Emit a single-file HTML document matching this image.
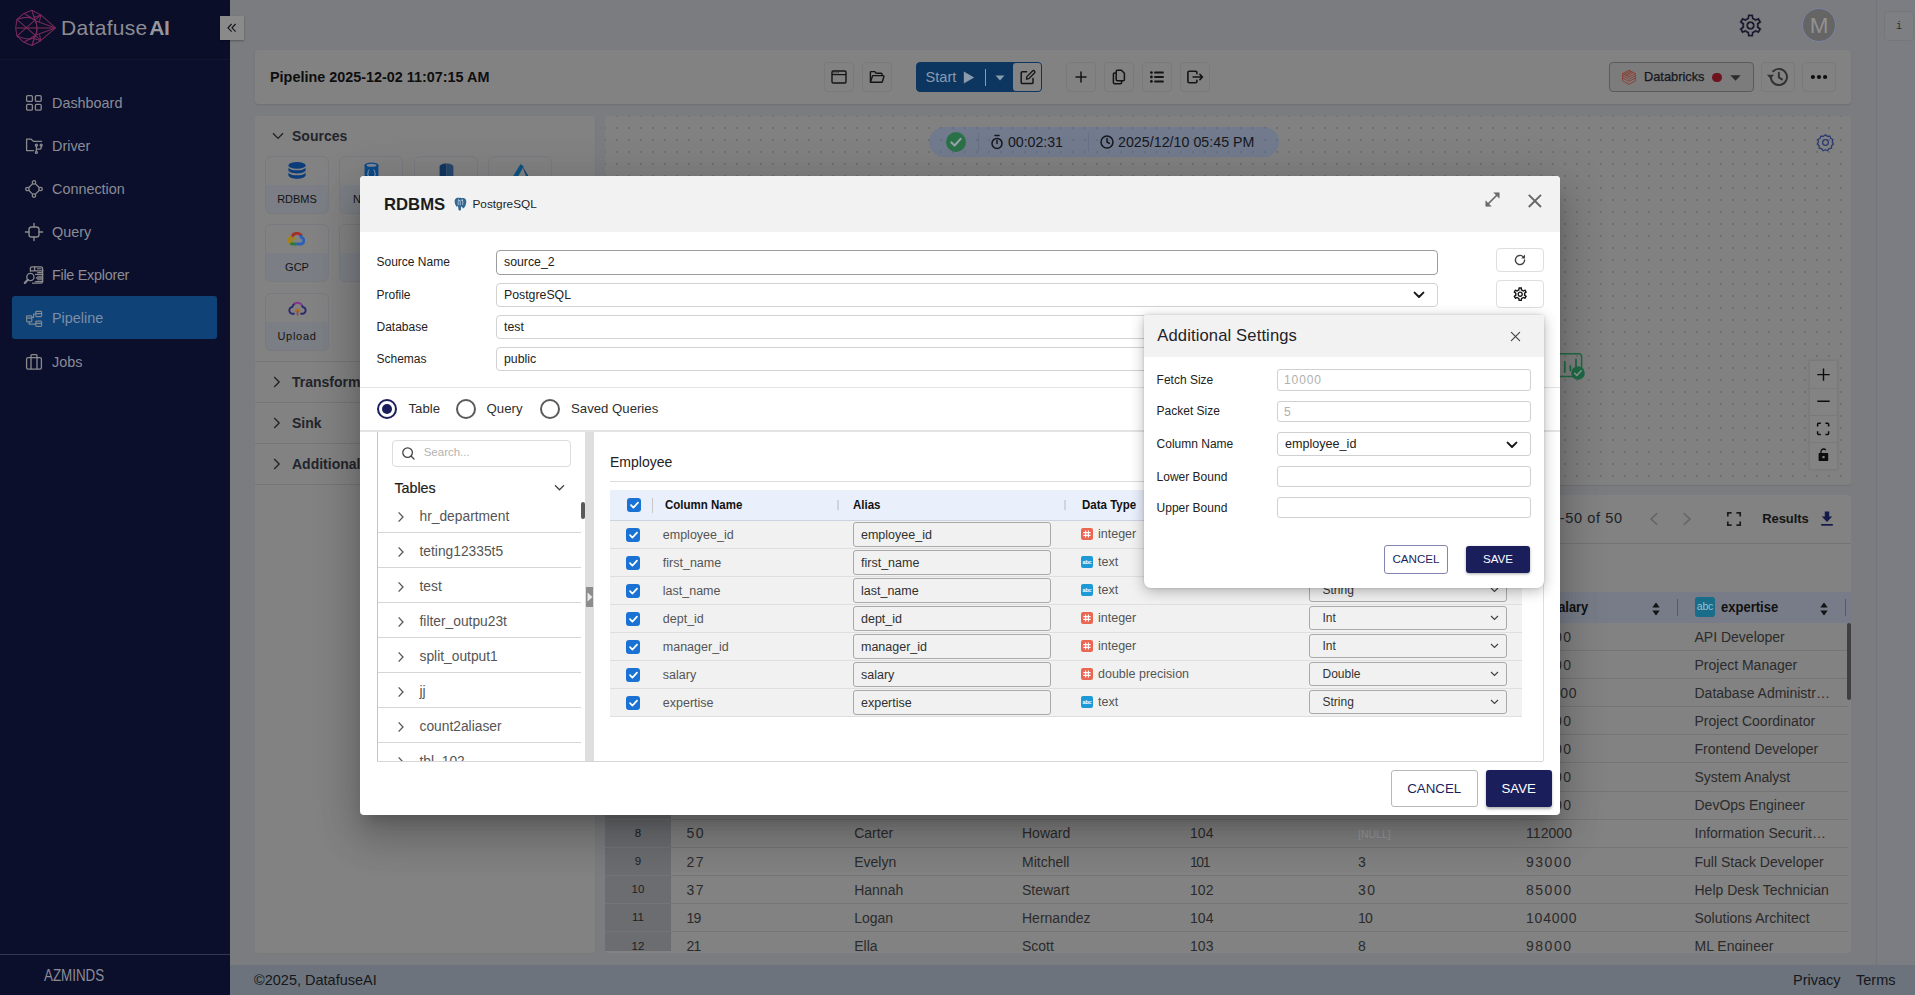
<!DOCTYPE html>
<html>
<head>
<meta charset="utf-8">
<title>DatafuseAI Pipeline</title>
<style>
*{box-sizing:border-box;margin:0;padding:0}
html,body{width:1915px;height:995px;overflow:hidden}
body{font-family:"Liberation Sans",sans-serif;background:#7b7c7f;position:relative;color:#1a1a1a}
.abs{position:absolute}
svg{display:block}
/* ---------- sidebar ---------- */
#sidebar{position:absolute;left:0;top:0;width:230px;height:995px;background:#0c0f2b}
#sidebar .hd{position:absolute;left:0;top:0;width:230px;height:60px;border-bottom:1px solid #10142f;background:#0b0e28}
#brand{position:absolute;left:61px;top:14px;font-size:21px;letter-spacing:.32px;color:#8b8c92;line-height:28px;white-space:nowrap}
#brand b{color:#96979d;letter-spacing:-.4px;margin-left:1.5px}
.nav{position:absolute;left:12px;width:205px;height:43px;border-radius:3px;color:#8a8c97;font-size:14.4px;line-height:42px;padding-left:40px;white-space:nowrap}
.nav svg{position:absolute;left:12px;top:11px}
.nav.act{background:#0f4277;color:#7d8ea6;line-height:45px}.nav.act svg{top:12.6px}
#sfoot{position:absolute;left:0;top:954px;width:230px;height:41px;border-top:1px solid #34374f;color:#8a8c97;font-size:16px;line-height:41px;padding-left:0}
/* ---------- main ---------- */
#collapse{position:absolute;left:220px;top:16px;width:24px;height:24px;background:#8a8a8a;box-shadow:0 1px 2px rgba(0,0,0,.3)}
.card{position:absolute;background:#828282;border:1px solid #828282;border-radius:3px}
.tbtn{position:absolute;width:30px;height:30px;top:62px;border:1px solid #797a7c;border-radius:4px;background:#828282}
.tbtn svg{position:absolute;left:50%;top:50%;transform:translate(-50%,-50%)}
#footer{position:absolute;left:230px;top:965px;width:1685px;height:30px;background:#6c737c;color:#15171b;font-size:14.5px;line-height:30px}
#rail{position:absolute;left:1876px;top:0;width:38px;height:965px;background:#7b7d82;border-left:1px solid #737579}
/* ---------- modal ---------- */
#modal{position:absolute;left:360px;top:176px;width:1200px;height:639px;background:#fff;border-radius:4px;box-shadow:0 11px 15px -7px rgba(0,0,0,.2),0 24px 38px 3px rgba(0,0,0,.14),0 9px 46px 8px rgba(0,0,0,.12)}
#mhead{position:absolute;left:0;top:0;width:1200px;height:56px;background:#f2f2f2;border-radius:4px 4px 0 0}
.lbl{position:absolute;font-size:12.5px;color:#222;white-space:nowrap}
.inp{position:absolute;border:1px solid #c9c9c9;border-radius:3px;background:#fff;font-size:12.5px;color:#222;padding-left:7px;white-space:nowrap}
/* ---------- popup ---------- */
#pop{position:absolute;left:1144px;top:315px;width:400px;height:273px;background:#fff;border-radius:2px 2px 7px 7px;box-shadow:0 3px 14px rgba(0,0,0,.28),0 0 3px rgba(0,0,0,.15)}
#phead{position:absolute;left:0;top:0;width:400px;height:41.5px;background:#f2f2f2;border-radius:2px 2px 0 0}
</style>
</head>
<body>
<!--SIDEBAR-->
<div id="sidebar">
  <div class="hd"></div>
  <svg class="abs" style="left:8px;top:4px" width="60" height="48" viewBox="8 4 60 48" fill="none" stroke="#76295a" stroke-width="1.05" stroke-linejoin="round">
<path d="M31.9 10.3L23.9 13.4L16.9 19.4L15.7 27.9L16.9 36.1L23.9 42.3L31.9 45.5L40.8 40.7L55.5 27.9L40.8 14.9Z"/>
<path d="M15.7 27.9H55" stroke-width="1.5" stroke="#5e234b"/>
<path d="M16.9 19.4L37 36.8L40.8 40.7M16.9 36.1L40.8 14.9M16.9 19.4C24 17 31 17 34 19.5C38 24 38 32 34 37.5C31 40 24 39 16.9 36.100000000000001"/>
<path d="M23.9 13.4L36 21L55.5 27.9M23.9 42.3L36 35L55.5 27.9M31.9 10.3L36.5 24L37 32L31.9 45.5M31.9 10.3L34 17.5L40.8 14.9M31.9 45.5L34 38.5L40.8 40.7M40.8 14.9L39.5 21.5M40.8 40.7L39.5 34.5M23.9 13.4L31 17.5M23.9 42.3L31 38.5"/>
</svg>
  <div id="brand">Datafuse<b>AI</b></div>
  <div class="nav" style="top:82px"><svg width="20" height="20" viewBox="0 0 20 20" fill="none" stroke="#8a8a8d" stroke-width="1.3"><rect x="2.6" y="2.6" width="5.8" height="5.8" rx="1.2"/><rect x="11.4" y="2.6" width="5.8" height="5.8" rx="1.2"/><rect x="2.6" y="11.4" width="5.8" height="5.8" rx="1.2"/><rect x="11.4" y="11.4" width="5.8" height="5.8" rx="1.2"/></svg>Dashboard</div>
  <div class="nav" style="top:125.2px"><svg width="20" height="20" viewBox="0 0 20 20" fill="none" stroke="#8a8a8d" stroke-width="1.3" stroke-linecap="round" stroke-linejoin="round"><path d="M9.6 14.6H2.6V3.2h4.6l2.2 2.2h8.2"/><circle cx="12.4" cy="9.2" r="1" /><circle cx="17.2" cy="9.2" r="1"/><circle cx="12.4" cy="16.4" r="1"/><path d="M12.4 10.2v5.2M17.2 10.2v1.2c0 1.2-.8 1.8-2 1.8h-2.8"/></svg>Driver</div>
  <div class="nav" style="top:168.3px"><svg width="20" height="20" viewBox="0 0 20 20" fill="none" stroke="#8a8a8d" stroke-width="1.3"><circle cx="10" cy="3.4" r="1.7"/><circle cx="10" cy="16.6" r="1.7"/><circle cx="3.4" cy="10" r="1.7"/><circle cx="16.6" cy="10" r="1.7"/><path d="M8.8 4.6L4.6 8.8M11.2 4.6l4.2 4.2M4.6 11.2l4.2 4.2M15.4 11.2l-4.2 4.2"/></svg>Connection</div>
  <div class="nav" style="top:211.2px"><svg width="20" height="20" viewBox="0 0 20 20" fill="none" stroke="#8a8a8d" stroke-width="1.4" stroke-linecap="round"><rect x="5" y="5" width="10" height="10" rx="2.6"/><path d="M10 1.4V5M10 15v3.6M1.4 10H5M15 10h3.6"/></svg>Query</div>
  <div class="nav" style="top:254.3px;letter-spacing:-0.28px"><svg width="22" height="22" viewBox="0 0 22 22" fill="none" stroke="#8a8a8d" stroke-width="1.3" stroke-linecap="round" style="left:11px;top:10px"><path d="M7.4 7.2V4.4c0-1 .7-1.6 1.6-1.6h9c1 0 1.6.7 1.6 1.6v13.200000000000001c0 1-.7 1.6-1.6 1.6H9.6"/><path d="M7.6 6.800000000000001H20M12.6 10.4h7.2M13.4 14h6.4M12.6 17.6h7.2M11.6 2.8v4"/><path d="M14.4 4.8h3.6M14.6 8.6h4M14.6 12.2h4M14.6 15.8h4" stroke-width="1.1"/><circle cx="7.4" cy="13" r="3.6"/><path d="M4.8 15.8L1.8 19" stroke-width="2.2"/></svg>File Explorer</div>
  <div class="nav act" style="top:296px"><svg width="20" height="20" viewBox="0 0 20 20" fill="none" stroke="#7f8791" stroke-width="1.2" stroke-linejoin="round"><rect x="2.6" y="6.8" width="5.2" height="6" rx=".8"/><rect x="11.8" y="2.4" width="5.8" height="5.2" rx=".8"/><rect x="11.8" y="12.2" width="5.8" height="5.2" rx=".8"/><path d="M2.6 9.2h5.2M11.8 4.6h5.800000000000001M11.8 14.4h5.800000000000001M7.8 8.4h1.8V5h2.2M5.2 12.8v2.4h6.6"/></svg>Pipeline</div>
  <div class="nav" style="top:340.5px"><svg width="20" height="20" viewBox="0 0 20 20" fill="none" stroke="#8a8a8d" stroke-width="1.3" stroke-linejoin="round"><rect x="2.6" y="5.6" width="14.8" height="11.6" rx="1.4"/><path d="M7 5.4V3.6c0-.6.4-1 1-1h4c.6 0 1 .4 1 1v1.8M7 5.6v11.6M13 5.6v11.6"/></svg>Jobs</div>
  <div id="sfoot"><span style="position:absolute;left:43.5px;top:0;transform:scaleX(.835);transform-origin:0 0">AZMINDS</span></div>
</div>
<!--MAIN-->
<div id="collapse"><svg width="24" height="24" viewBox="0 0 24 24" fill="none" stroke="#111318" stroke-width="1.1"><path d="M11.600000000000001 8L8 11.8l3.6 3.8M15.600000000000001 8L12 11.8l3.6 3.8"/></svg></div>
<div class="card" id="topcard" style="left:255px;top:50px;width:1596px;height:54px;box-shadow:0 1px 2px rgba(0,0,0,.1)"></div>
<div class="card" id="leftcard" style="left:255px;top:116px;width:341px;height:838px;border-color:#828282 #7a7a7b #7a7a7b #828282">
<style>
.tile{position:absolute;width:64px;height:58px;border:1px solid #787a7f;border-radius:6px;background:linear-gradient(#828282 0,#828282 28px,#7b7e84 28px);overflow:hidden}
.tile span{position:absolute;left:0;width:62px;top:34px;text-align:center;font-size:11px;line-height:16px;color:#141414}
.tile svg{position:absolute}
.acc{position:absolute;left:-1px;width:341px;height:41px;border-top:1px solid #757678;font-size:14px;font-weight:700;color:#23252b;line-height:40px;padding-left:37px;white-space:nowrap}
.acc svg{position:absolute;left:18px;top:14px}
</style>
<svg class="abs" style="left:16px;top:15px" width="12" height="8" viewBox="0 0 12 8" fill="none" stroke="#222" stroke-width="1.3"><path d="M1 1.2l5 5.2 5-5.2"/></svg>
<div class="abs" style="left:36px;top:10px;font-size:14px;font-weight:700;color:#23252b;line-height:18px">Sources</div>
<div class="tile" style="left:9px;top:39px"><svg style="left:21px;top:4px" width="20" height="20" viewBox="0 0 20 20" fill="#0c3d7a"><ellipse cx="10" cy="4.4" rx="8.6" ry="3.4"/><path d="M1.4 6.4c1 2 4.6 2.800000000000001 8.6 2.800000000000001s7.6-.8 8.6-2.800000000000001v3.2c-1 2-4.6 2.800000000000001-8.6 2.800000000000001S2.4 11.600000000000001 1.4 9.6zM1.4 11.4c1 2 4.6 2.800000000000001 8.6 2.800000000000001s7.6-.8 8.6-2.800000000000001v3.2c-1 2.2-4.6 3.2-8.6 3.2s-7.6-1-8.6-3.2z"/></svg><span>RDBMS</span></div>
<div class="tile" style="left:83px;top:39px"><svg style="left:24px;top:5px" width="15" height="22" viewBox="0 0 15 22"><path d="M.6 3.2v15.4c0 1.400000000000001 3 2.400000000000001 6.9 2.400000000000001s6.9-1 6.9-2.400000000000001V3.2z" fill="#0c4a88"/><ellipse cx="7.5" cy="3.2" rx="6.9" ry="2.6" fill="#0c4a88"/><ellipse cx="7.5" cy="3.3" rx="5" ry="1.5" fill="#7d8895"/><path d="M5.6 8c-1.2 0-1.400000000000001.6-1.400000000000001 1.6v1.4c0 .6-.4 1-.8 1 .4 0 .8.4.8 1v1.400000000000001c0 1 .2 1.600000000000001 1.400000000000001 1.600000000000001M9.4 8c1.2 0 1.400000000000001.6 1.400000000000001 1.6v1.4c0 .6.4 1 .8 1-.4 0-.8.4-.8 1v1.400000000000001c0 1-.2 1.600000000000001-1.400000000000001 1.600000000000001" stroke="#8b9cb0" stroke-width="1" fill="none"/></svg><span>NoSQL</span></div>
<div class="tile" style="left:158px;top:39px"><svg style="left:24px;top:5.5px" width="15" height="22" viewBox="0 0 15 22"><path d="M.6 4c0-2 3-3.4 6.9-3.4V21.2c-3.9 0-6.9-1-6.9-2.200000000000001z" fill="#113761"/><path d="M14.4 4c0-2-3-3.4-6.9-3.4V21.2c3.9 0 6.9-1 6.9-2.200000000000001z" fill="#27476c"/></svg><span>S3</span></div>
<div class="tile" style="left:232px;top:39px"><svg style="left:19px;top:6px" width="27" height="22" viewBox="0 0 27 22"><path d="M12.6 1L2.4 17.6l5.6-.4L15.6 3.6z" fill="#0c5384"/><path d="M14.2 2.8l4.4 12.2-8.6 6.4 15.6.2z" fill="#0a4775"/></svg><span>Azure</span></div>
<div class="tile" style="left:9px;top:107px"><svg style="left:22px;top:6.5px" width="17" height="14.2" viewBox="0 0 18 15" fill="none" stroke-width="3.1" stroke-linecap="butt"><path d="M12.2 4.6l1.5-1.5A6 6 0 0 0 3.9 5.4" stroke="#a3332a"/><path d="M4.1 5a4 4 0 0 0-1.1 7.1" stroke="#a58212"/><path d="M6.2 9.6c-.9-.5-1.100000000000001-1.600000000000001-.5-2.400000000000001.6-.8 1.700000000000001-.9 2.400000000000001-.3" stroke="#a58212" stroke-width="2.2"/><path d="M2.8 11.700000000000001c.8.7 1.700000000000001 1 2.700000000000001 1h3.6" stroke="#2a7a3e"/><path d="M8.9 12.700000000000001h4.3a3.500000000000001 3.500000000000001 0 0 0 1.2-6.800000000000001c-.2-1-.7-1.900000000000001-1.400000000000001-2.600000000000001" stroke="#2c5fb5"/></svg><span>GCP</span></div>
<div class="tile" style="left:83px;top:107px"></div>
<div class="tile" style="left:9px;top:176px"><svg style="left:22px;top:5.5px" width="19" height="16.2" viewBox="0 0 20 17" fill="none" stroke-width="2" stroke-linecap="round" stroke-linejoin="round"><path d="M6.2 14.4H5.2A3.5 3.5 0 0 1 4.6 7.4 5.4 5.4 0 0 1 7 3.800000000000001" stroke="#2b2a6b"/><path d="M7 3.800000000000001A5.4 5.4 0 0 1 15.2 6.6" stroke="#86358a"/><path d="M15.2 6.6l.2.800000000000001a3.500000000000001 3.500000000000001 0 0 1-.6 7h-1" stroke="#2b2a6b"/><path d="M10 15.6V10.4" stroke="#a83a3a" stroke-width="1.7"/><path d="M7.800000000000001 11.8L10 9.600000000000001l2.200000000000001 2.200000000000001" stroke="#b06a1c" stroke-width="1.7"/></svg><span style="letter-spacing:.7px">Upload</span></div>
<div class="acc" style="top:244px"><svg width="8" height="12" viewBox="0 0 8 12" fill="none" stroke="#222" stroke-width="1.3"><path d="M1.200000000000001 1l5 5-5 5"/></svg>Transformations</div>
<div class="acc" style="top:285px"><svg width="8" height="12" viewBox="0 0 8 12" fill="none" stroke="#222" stroke-width="1.3"><path d="M1.200000000000001 1l5 5-5 5"/></svg>Sink</div>
<div class="acc" style="top:326px"><svg width="8" height="12" viewBox="0 0 8 12" fill="none" stroke="#222" stroke-width="1.3"><path d="M1.200000000000001 1l5 5-5 5"/></svg>Additional Settings</div>
<div class="abs" style="left:-1px;top:367px;width:341px;height:1px;background:#757678"></div>
</div>
<div class="card" id="canvas" style="left:605px;top:116px;width:1246px;height:369px;border-color:transparent;box-shadow:0 1px 1px rgba(0,0,0,.08);background-color:#818181;background-image:radial-gradient(circle,#6f7073 0.9px,rgba(111,112,115,0) 1.5px);background-size:12px 12px;background-position:5px 5px">
  <!-- status pill -->
  <div class="abs" style="left:323px;top:10px;width:350px;height:30px;border-radius:15px;background:rgba(92,114,162,.4)">
    <div class="abs" style="left:17px;top:5px;width:20px;height:20px;border-radius:50%;background:#2a7148"></div>
    <svg class="abs" style="left:17px;top:5px" width="20" height="20" viewBox="0 0 20 20" fill="none" stroke="#9aa2ad" stroke-width="2.1" stroke-linecap="round" stroke-linejoin="round"><path d="M5.4 10.4l3.2 3.1 6-6.6"/></svg>
    <div class="abs" style="left:49px;top:6px;width:1px;height:18px;background:#687085"></div>
    <svg class="abs" style="left:61px;top:6.5px" width="14" height="16" viewBox="0 0 14 16" fill="none" stroke="#15171c" stroke-width="1.5" stroke-linecap="round"><circle cx="7" cy="9.4" r="5"/><path d="M5 1.6h4M7 6.6v3"/></svg>
    <span class="abs" style="left:79px;top:5.5px;font-size:14.2px;line-height:18px;color:#15171c;letter-spacing:-.04px">00:02:31</span>
    <div class="abs" style="left:159px;top:6px;width:1px;height:18px;background:#687085"></div>
    <svg class="abs" style="left:170px;top:6.5px" width="16" height="16" viewBox="0 0 16 16" fill="none" stroke="#15171c" stroke-width="1.5" stroke-linecap="round" stroke-linejoin="round"><circle cx="8" cy="8" r="6"/><path d="M8 4.4V8l2.4 1.4"/></svg>
    <span class="abs" style="left:189px;top:5.5px;font-size:14.2px;line-height:18px;color:#15171c;letter-spacing:.04px;white-space:nowrap">2025/12/10 05:45 PM</span>
  </div>
  <!-- canvas gear -->
  <svg class="abs" style="left:1209.5px;top:15.5px" width="19" height="19" viewBox="0 0 24 24" fill="none" stroke="#2a3870" stroke-width="1.6" stroke-linejoin="round"><circle cx="12" cy="12" r="3.6"/><path d="M12 2.2l2.400000000000001 2 3.1-.4 1 3 2.800000000000001 1.4-.8 3 1.500000000000001 2.800000000000001-2.3 2.100000000000001-.1 3.1-3.1.6-1.8 2.6-2.900000000000001-1.2-2.900000000000001 1.2-1.8-2.6-3.1-.6-.1-3.1-2.300000000000001-2.100000000000001 1.500000000000001-2.800000000000001-.8-3 2.800000000000001-1.400000000000001 1-3 3.1.4z"/></svg>
  <!-- node icon -->
  <svg class="abs" style="left:948px;top:233px" width="36" height="32" viewBox="1554 350 36 32" fill="none" stroke="#1f6b45" stroke-width="1.5" stroke-linecap="round"><rect x="1556" y="353.8" width="25.6" height="22.6" rx="3"/><path d="M1564.8 362v10M1570.4 366v4.5M1576 359.5v7" stroke-width="1.8"/><circle cx="1578" cy="373" r="6.8" fill="#1f6b45" stroke="none"/><path d="M1574.6 373.2l2.3 2.200000000000001 4.2-4.600000000000001" stroke="#8f9b95" stroke-width="1.5"/></svg>
  <!-- zoom controls -->
  <div class="abs" style="left:1204px;top:244px;width:26.5px;height:108px;background:#838383;box-shadow:0 0 2px 1px rgba(0,0,0,.08)">
    <div class="abs" style="left:0;top:27px;width:27px;height:1px;background:#7a7a7a"></div>
    <div class="abs" style="left:0;top:54px;width:27px;height:1px;background:#7a7a7a"></div>
    <div class="abs" style="left:0;top:81px;width:27px;height:1px;background:#7a7a7a"></div>
    <svg class="abs" style="left:0;top:0" width="27" height="108" viewBox="0 0 27 108" fill="none" stroke="#0c0c0c" stroke-width="1.4"><path d="M13.5 7.4v12.4M7.3 13.6h12.4M7.3 40.2h12.4"/><path d="M7.6 65.6v-2.4c0-.6.4-1 1-1h2.2M15.4 62.2h2.2c.6 0 1 .4 1 1v2.4M18.6 70.2v2.4c0 .6-.4 1-1 1h-2.2M10.8 73.6H8.6c-.6 0-1-.4-1-1v-2.4" stroke-width="1.5"/><path d="M8.6 93c0-.6.4-1 1-1h7.6c.6 0 1 .4 1 1v6c0 .6-.4 1-1 1H9.6c-.6 0-1-.4-1-1z" fill="#0c0c0c" stroke="none"/><path d="M11 92c-.4-2.800000000000001 1.2-4 2.600000000000001-4 .9 0 1.600000000000001.3 2.200000000000001 1" stroke-width="1.3"/><rect x="12.4" y="95" width="2.2" height="2.2" fill="#838383" stroke="none"/></svg>
  </div>
</div>
<!--B:res-->
<div class="card" id="results" style="left:605px;top:495px;width:1246px;height:458px;overflow:hidden;border:0">
<div class="abs" style="left:917px;width:100.6px;text-align:right;top:14px;font-size:14.5px;line-height:19px;color:#202227;white-space:nowrap;letter-spacing:.62px">1-50 of 50</div>
<svg class="abs" style="left:1044px;top:16.5px" width="10" height="14" viewBox="0 0 10 14" fill="none" stroke="#636363" stroke-width="1.5"><path d="M8.2 1.2L2 7l6.2 5.800000000000001"/></svg>
<svg class="abs" style="left:1076.5px;top:16.5px" width="10" height="14" viewBox="0 0 10 14" fill="none" stroke="#636363" stroke-width="1.5"><path d="M1.8 1.2L8 7l-6.2 5.800000000000001"/></svg>
<svg class="abs" style="left:1121px;top:16px" width="16" height="16" viewBox="0 0 16 16" fill="none" stroke="#1c1c1c" stroke-width="1.7"><path d="M1.8 5.6V1.8h3.8M10.4 1.8h3.800000000000001v3.8M14.2 10.4v3.800000000000001h-3.800000000000001M5.6 14.2H1.8v-3.800000000000001"/></svg>
<div class="abs" style="left:1157.3px;top:15px;font-size:13px;font-weight:700;line-height:17px;color:#141414;letter-spacing:-.1px">Results</div>
<svg class="abs" style="left:1216px;top:16px" width="12" height="15" viewBox="0 0 12 15" fill="#141a4a"><path d="M3.8 0.4h4.4v5.2h3L6 11 .8 5.6h3z"/><rect x=".2" y="13" width="11.6" height="1.7"/></svg>
<div class="abs" style="left:0;top:48px;width:1246px;height:1px;background:#747474"></div>
<div class="abs" style="left:0;top:97px;width:1246px;height:30.5px;background:#777c88"></div>
<div class="abs" style="left:946px;top:103px;font-size:14px;font-weight:700;line-height:19px;color:#101010;transform:scaleX(.92);transform-origin:0 0">salary</div>
<svg class="abs" style="left:1046.5px;top:107px" width="8" height="14" viewBox="0 0 8 14" fill="#131313"><path d="M.3 5.6L4 .6l3.7 5zM.3 8.4L4 13.4l3.7-5z"/></svg>
<div class="abs" style="left:1072px;top:104px;width:1px;height:17px;background:#585b64"></div>
<div class="abs" style="left:1090px;top:102px;width:20px;height:20px;border-radius:3px;background:#176d8a;color:#9dbfcc;font-size:10.5px;line-height:19px;text-align:center;letter-spacing:-.2px">abc</div>
<div class="abs" style="left:1115.5px;top:103px;font-size:14px;font-weight:700;line-height:19px;color:#101010;transform:scaleX(.93);transform-origin:0 0">expertise</div>
<svg class="abs" style="left:1214.5px;top:107px" width="8" height="14" viewBox="0 0 8 14" fill="#131313"><path d="M.3 5.6L4 .6l3.7 5zM.3 8.4L4 13.4l3.7-5z"/></svg>
<div class="abs" style="left:1240px;top:104px;width:1px;height:17px;background:#585b64"></div>
<div class="abs" style="left:0;top:127.5px;width:66px;height:328.5px;background:#6c6d70"></div>
<div class="abs" style="left:0;top:155.0px;width:1243px;height:1px;background:#757575"></div>
<div class="abs" style="left:0;top:133.4px;width:66px;text-align:center;font-size:11.5px;line-height:16px;color:#1e1e1e">1</div>
<div class="abs" style="left:81.4px;top:132.7px;font-size:14px;line-height:19px;color:#2b2b2b;white-space:nowrap;letter-spacing:-0.69px">12</div>
<div class="abs" style="left:249.2px;top:132.7px;font-size:14px;line-height:19px;color:#2b2b2b;white-space:nowrap">Liam</div>
<div class="abs" style="left:417px;top:132.7px;font-size:14px;line-height:19px;color:#2b2b2b;white-space:nowrap">Johnson</div>
<div class="abs" style="left:585px;top:132.7px;font-size:14px;line-height:19px;color:#2b2b2b;white-space:nowrap;letter-spacing:-1.42px">101</div>
<div class="abs" style="left:753px;top:132.7px;font-size:14px;line-height:19px;color:#2b2b2b;white-space:nowrap;letter-spacing:1.51px">2</div>
<div class="abs" style="left:921px;top:132.7px;font-size:14px;line-height:19px;color:#2b2b2b;white-space:nowrap;letter-spacing:1.51px">95000</div>
<div class="abs" style="left:1089.5px;top:132.7px;font-size:14px;line-height:19px;color:#2b2b2b;white-space:nowrap">API Developer</div>
<div class="abs" style="left:0;top:183.1px;width:1243px;height:1px;background:#757575"></div>
<div class="abs" style="left:0;top:161.5px;width:66px;text-align:center;font-size:11.5px;line-height:16px;color:#1e1e1e">2</div>
<div class="abs" style="left:81.4px;top:160.8px;font-size:14px;line-height:19px;color:#2b2b2b;white-space:nowrap;letter-spacing:1.51px">45</div>
<div class="abs" style="left:249.2px;top:160.8px;font-size:14px;line-height:19px;color:#2b2b2b;white-space:nowrap">Olivia</div>
<div class="abs" style="left:417px;top:160.8px;font-size:14px;line-height:19px;color:#2b2b2b;white-space:nowrap">Smith</div>
<div class="abs" style="left:585px;top:160.8px;font-size:14px;line-height:19px;color:#2b2b2b;white-space:nowrap;letter-spacing:0.05px">102</div>
<div class="abs" style="left:753px;top:160.8px;font-size:14px;line-height:19px;color:#2b2b2b;white-space:nowrap;letter-spacing:1.51px">5</div>
<div class="abs" style="left:921px;top:160.8px;font-size:14px;line-height:19px;color:#2b2b2b;white-space:nowrap;letter-spacing:1.51px">90000</div>
<div class="abs" style="left:1089.5px;top:160.8px;font-size:14px;line-height:19px;color:#2b2b2b;white-space:nowrap">Project Manager</div>
<div class="abs" style="left:0;top:211.2px;width:1243px;height:1px;background:#757575"></div>
<div class="abs" style="left:0;top:189.6px;width:66px;text-align:center;font-size:11.5px;line-height:16px;color:#1e1e1e">3</div>
<div class="abs" style="left:81.4px;top:188.9px;font-size:14px;line-height:19px;color:#2b2b2b;white-space:nowrap;letter-spacing:1.51px">33</div>
<div class="abs" style="left:249.2px;top:188.9px;font-size:14px;line-height:19px;color:#2b2b2b;white-space:nowrap">Noah</div>
<div class="abs" style="left:417px;top:188.9px;font-size:14px;line-height:19px;color:#2b2b2b;white-space:nowrap">Williams</div>
<div class="abs" style="left:585px;top:188.9px;font-size:14px;line-height:19px;color:#2b2b2b;white-space:nowrap;letter-spacing:0.05px">103</div>
<div class="abs" style="left:753px;top:188.9px;font-size:14px;line-height:19px;color:#2b2b2b;white-space:nowrap;letter-spacing:1.51px">7</div>
<div class="abs" style="left:921px;top:188.9px;font-size:14px;line-height:19px;color:#2b2b2b;white-space:nowrap;letter-spacing:0.78px">105000</div>
<div class="abs" style="left:1089.5px;top:188.9px;font-size:14px;line-height:19px;color:#2b2b2b;white-space:nowrap">Database Administr…</div>
<div class="abs" style="left:0;top:239.3px;width:1243px;height:1px;background:#757575"></div>
<div class="abs" style="left:0;top:217.7px;width:66px;text-align:center;font-size:11.5px;line-height:16px;color:#1e1e1e">4</div>
<div class="abs" style="left:81.4px;top:217.0px;font-size:14px;line-height:19px;color:#2b2b2b;white-space:nowrap;letter-spacing:1.51px">8</div>
<div class="abs" style="left:249.2px;top:217.0px;font-size:14px;line-height:19px;color:#2b2b2b;white-space:nowrap">Emma</div>
<div class="abs" style="left:417px;top:217.0px;font-size:14px;line-height:19px;color:#2b2b2b;white-space:nowrap">Brown</div>
<div class="abs" style="left:585px;top:217.0px;font-size:14px;line-height:19px;color:#2b2b2b;white-space:nowrap;letter-spacing:-1.42px">101</div>
<div class="abs" style="left:753px;top:217.0px;font-size:14px;line-height:19px;color:#2b2b2b;white-space:nowrap;letter-spacing:-0.69px">12</div>
<div class="abs" style="left:921px;top:217.0px;font-size:14px;line-height:19px;color:#2b2b2b;white-space:nowrap;letter-spacing:1.51px">78000</div>
<div class="abs" style="left:1089.5px;top:217.0px;font-size:14px;line-height:19px;color:#2b2b2b;white-space:nowrap">Project Coordinator</div>
<div class="abs" style="left:0;top:267.4px;width:1243px;height:1px;background:#757575"></div>
<div class="abs" style="left:0;top:245.8px;width:66px;text-align:center;font-size:11.5px;line-height:16px;color:#1e1e1e">5</div>
<div class="abs" style="left:81.4px;top:245.1px;font-size:14px;line-height:19px;color:#2b2b2b;white-space:nowrap;letter-spacing:1.51px">29</div>
<div class="abs" style="left:249.2px;top:245.1px;font-size:14px;line-height:19px;color:#2b2b2b;white-space:nowrap">Ava</div>
<div class="abs" style="left:417px;top:245.1px;font-size:14px;line-height:19px;color:#2b2b2b;white-space:nowrap">Jones</div>
<div class="abs" style="left:585px;top:245.1px;font-size:14px;line-height:19px;color:#2b2b2b;white-space:nowrap;letter-spacing:0.05px">104</div>
<div class="abs" style="left:753px;top:245.1px;font-size:14px;line-height:19px;color:#2b2b2b;white-space:nowrap;letter-spacing:1.51px">4</div>
<div class="abs" style="left:921px;top:245.1px;font-size:14px;line-height:19px;color:#2b2b2b;white-space:nowrap;letter-spacing:1.51px">88000</div>
<div class="abs" style="left:1089.5px;top:245.1px;font-size:14px;line-height:19px;color:#2b2b2b;white-space:nowrap">Frontend Developer</div>
<div class="abs" style="left:0;top:295.5px;width:1243px;height:1px;background:#757575"></div>
<div class="abs" style="left:0;top:273.9px;width:66px;text-align:center;font-size:11.5px;line-height:16px;color:#1e1e1e">6</div>
<div class="abs" style="left:81.4px;top:273.2px;font-size:14px;line-height:19px;color:#2b2b2b;white-space:nowrap;letter-spacing:-0.69px">41</div>
<div class="abs" style="left:249.2px;top:273.2px;font-size:14px;line-height:19px;color:#2b2b2b;white-space:nowrap">Mason</div>
<div class="abs" style="left:417px;top:273.2px;font-size:14px;line-height:19px;color:#2b2b2b;white-space:nowrap">Garcia</div>
<div class="abs" style="left:585px;top:273.2px;font-size:14px;line-height:19px;color:#2b2b2b;white-space:nowrap;letter-spacing:0.05px">102</div>
<div class="abs" style="left:753px;top:273.2px;font-size:14px;line-height:19px;color:#2b2b2b;white-space:nowrap;letter-spacing:1.51px">9</div>
<div class="abs" style="left:921px;top:273.2px;font-size:14px;line-height:19px;color:#2b2b2b;white-space:nowrap;letter-spacing:1.51px">82000</div>
<div class="abs" style="left:1089.5px;top:273.2px;font-size:14px;line-height:19px;color:#2b2b2b;white-space:nowrap">System Analyst</div>
<div class="abs" style="left:0;top:323.6px;width:1243px;height:1px;background:#757575"></div>
<div class="abs" style="left:0;top:302.0px;width:66px;text-align:center;font-size:11.5px;line-height:16px;color:#1e1e1e">7</div>
<div class="abs" style="left:81.4px;top:301.3px;font-size:14px;line-height:19px;color:#2b2b2b;white-space:nowrap;letter-spacing:-0.69px">16</div>
<div class="abs" style="left:249.2px;top:301.3px;font-size:14px;line-height:19px;color:#2b2b2b;white-space:nowrap">Lucas</div>
<div class="abs" style="left:417px;top:301.3px;font-size:14px;line-height:19px;color:#2b2b2b;white-space:nowrap">Davis</div>
<div class="abs" style="left:585px;top:301.3px;font-size:14px;line-height:19px;color:#2b2b2b;white-space:nowrap;letter-spacing:0.05px">103</div>
<div class="abs" style="left:753px;top:301.3px;font-size:14px;line-height:19px;color:#2b2b2b;white-space:nowrap;letter-spacing:1.51px">6</div>
<div class="abs" style="left:921px;top:301.3px;font-size:14px;line-height:19px;color:#2b2b2b;white-space:nowrap;letter-spacing:1.51px">99000</div>
<div class="abs" style="left:1089.5px;top:301.3px;font-size:14px;line-height:19px;color:#2b2b2b;white-space:nowrap">DevOps Engineer</div>
<div class="abs" style="left:0;top:351.7px;width:1243px;height:1px;background:#757575"></div>
<div class="abs" style="left:0;top:330.1px;width:66px;text-align:center;font-size:11.5px;line-height:16px;color:#1e1e1e">8</div>
<div class="abs" style="left:81.4px;top:329.4px;font-size:14px;line-height:19px;color:#2b2b2b;white-space:nowrap;letter-spacing:1.51px">50</div>
<div class="abs" style="left:249.2px;top:329.4px;font-size:14px;line-height:19px;color:#2b2b2b;white-space:nowrap">Carter</div>
<div class="abs" style="left:417px;top:329.4px;font-size:14px;line-height:19px;color:#2b2b2b;white-space:nowrap">Howard</div>
<div class="abs" style="left:585px;top:329.4px;font-size:14px;line-height:19px;color:#2b2b2b;white-space:nowrap;letter-spacing:0.05px">104</div>
<div class="abs" style="left:753px;top:331.9px;font-size:10.5px;line-height:14px;color:#9a9a9a">[NULL]</div>
<div class="abs" style="left:921px;top:329.4px;font-size:14px;line-height:19px;color:#2b2b2b;white-space:nowrap;letter-spacing:0.05px">112000</div>
<div class="abs" style="left:1089.5px;top:329.4px;font-size:14px;line-height:19px;color:#2b2b2b;white-space:nowrap">Information Securit…</div>
<div class="abs" style="left:0;top:379.8px;width:1243px;height:1px;background:#757575"></div>
<div class="abs" style="left:0;top:358.2px;width:66px;text-align:center;font-size:11.5px;line-height:16px;color:#1e1e1e">9</div>
<div class="abs" style="left:81.4px;top:357.5px;font-size:14px;line-height:19px;color:#2b2b2b;white-space:nowrap;letter-spacing:1.51px">27</div>
<div class="abs" style="left:249.2px;top:357.5px;font-size:14px;line-height:19px;color:#2b2b2b;white-space:nowrap">Evelyn</div>
<div class="abs" style="left:417px;top:357.5px;font-size:14px;line-height:19px;color:#2b2b2b;white-space:nowrap">Mitchell</div>
<div class="abs" style="left:585px;top:357.5px;font-size:14px;line-height:19px;color:#2b2b2b;white-space:nowrap;letter-spacing:-1.42px">101</div>
<div class="abs" style="left:753px;top:357.5px;font-size:14px;line-height:19px;color:#2b2b2b;white-space:nowrap;letter-spacing:1.51px">3</div>
<div class="abs" style="left:921px;top:357.5px;font-size:14px;line-height:19px;color:#2b2b2b;white-space:nowrap;letter-spacing:1.51px">93000</div>
<div class="abs" style="left:1089.5px;top:357.5px;font-size:14px;line-height:19px;color:#2b2b2b;white-space:nowrap">Full Stack Developer</div>
<div class="abs" style="left:0;top:407.9px;width:1243px;height:1px;background:#757575"></div>
<div class="abs" style="left:0;top:386.3px;width:66px;text-align:center;font-size:11.5px;line-height:16px;color:#1e1e1e">10</div>
<div class="abs" style="left:81.4px;top:385.6px;font-size:14px;line-height:19px;color:#2b2b2b;white-space:nowrap;letter-spacing:1.51px">37</div>
<div class="abs" style="left:249.2px;top:385.6px;font-size:14px;line-height:19px;color:#2b2b2b;white-space:nowrap">Hannah</div>
<div class="abs" style="left:417px;top:385.6px;font-size:14px;line-height:19px;color:#2b2b2b;white-space:nowrap">Stewart</div>
<div class="abs" style="left:585px;top:385.6px;font-size:14px;line-height:19px;color:#2b2b2b;white-space:nowrap;letter-spacing:0.05px">102</div>
<div class="abs" style="left:753px;top:385.6px;font-size:14px;line-height:19px;color:#2b2b2b;white-space:nowrap;letter-spacing:1.51px">30</div>
<div class="abs" style="left:921px;top:385.6px;font-size:14px;line-height:19px;color:#2b2b2b;white-space:nowrap;letter-spacing:1.51px">85000</div>
<div class="abs" style="left:1089.5px;top:385.6px;font-size:14px;line-height:19px;color:#2b2b2b;white-space:nowrap">Help Desk Technician</div>
<div class="abs" style="left:0;top:436.0px;width:1243px;height:1px;background:#757575"></div>
<div class="abs" style="left:0;top:414.4px;width:66px;text-align:center;font-size:11.5px;line-height:16px;color:#1e1e1e">11</div>
<div class="abs" style="left:81.4px;top:413.7px;font-size:14px;line-height:19px;color:#2b2b2b;white-space:nowrap;letter-spacing:-0.69px">19</div>
<div class="abs" style="left:249.2px;top:413.7px;font-size:14px;line-height:19px;color:#2b2b2b;white-space:nowrap">Logan</div>
<div class="abs" style="left:417px;top:413.7px;font-size:14px;line-height:19px;color:#2b2b2b;white-space:nowrap">Hernandez</div>
<div class="abs" style="left:585px;top:413.7px;font-size:14px;line-height:19px;color:#2b2b2b;white-space:nowrap;letter-spacing:0.05px">104</div>
<div class="abs" style="left:753px;top:413.7px;font-size:14px;line-height:19px;color:#2b2b2b;white-space:nowrap;letter-spacing:-0.69px">10</div>
<div class="abs" style="left:921px;top:413.7px;font-size:14px;line-height:19px;color:#2b2b2b;white-space:nowrap;letter-spacing:0.78px">104000</div>
<div class="abs" style="left:1089.5px;top:413.7px;font-size:14px;line-height:19px;color:#2b2b2b;white-space:nowrap">Solutions Architect</div>
<div class="abs" style="left:0;top:464.1px;width:1243px;height:1px;background:#757575"></div>
<div class="abs" style="left:0;top:442.5px;width:66px;text-align:center;font-size:11.5px;line-height:16px;color:#1e1e1e">12</div>
<div class="abs" style="left:81.4px;top:441.8px;font-size:14px;line-height:19px;color:#2b2b2b;white-space:nowrap;letter-spacing:-0.69px">21</div>
<div class="abs" style="left:249.2px;top:441.8px;font-size:14px;line-height:19px;color:#2b2b2b;white-space:nowrap">Ella</div>
<div class="abs" style="left:417px;top:441.8px;font-size:14px;line-height:19px;color:#2b2b2b;white-space:nowrap">Scott</div>
<div class="abs" style="left:585px;top:441.8px;font-size:14px;line-height:19px;color:#2b2b2b;white-space:nowrap;letter-spacing:0.05px">103</div>
<div class="abs" style="left:753px;top:441.8px;font-size:14px;line-height:19px;color:#2b2b2b;white-space:nowrap;letter-spacing:1.51px">8</div>
<div class="abs" style="left:921px;top:441.8px;font-size:14px;line-height:19px;color:#2b2b2b;white-space:nowrap;letter-spacing:1.51px">98000</div>
<div class="abs" style="left:1089.5px;top:441.8px;font-size:14px;line-height:19px;color:#2b2b2b;white-space:nowrap">ML Engineer</div>
<div class="abs" style="left:0;top:456px;width:1246px;height:3px;background:#828282"></div>
<div class="abs" style="left:1242px;top:128px;width:4px;height:77px;border-radius:2px;background:#3f3f3f"></div>
</div>
<!--E:res-->
<div class="abs" style="left:270px;top:68px;font-size:14.4px;font-weight:700;color:#0e0e0e;line-height:18px;white-space:nowrap">Pipeline 2025-12-02 11:07:15 AM</div>
<div class="tbtn" style="left:824px"><svg width="18" height="18" viewBox="0 0 18 18" fill="none" stroke="#141414" stroke-width="1.4"><rect x="2" y="3" width="14" height="12" rx="1.2"/><path d="M2 6.6h14" stroke-width="1.2"/><path d="M3.4 4.8h1M5.6 4.8h1M7.8 4.8h1" stroke-width="1"/></svg></div>
<div class="tbtn" style="left:862px"><svg width="18" height="18" viewBox="0 0 18 18" fill="none" stroke="#141414" stroke-width="1.4" stroke-linejoin="round"><path d="M2.4 13.6V4.4c0-.5.3-.8.8-.8h3.4l1.6 1.6h5c.5 0 .8.3.8.8v1.4M2.4 14.2l2-6c.1-.4.4-.6.8-.6h10c.6 0 .8.4.7.9l-1.500000000000001 5c-.1.4-.4.7-.9.7H2.4z"/></svg></div>
<div class="abs" style="left:916px;top:62px;width:126px;height:30px;background:#0c3560;border-radius:4px;border:1px solid #0c3560">
  <span class="abs" style="left:8.5px;top:5px;font-size:14.6px;line-height:18px;color:#8a9bae">Start</span>
  <svg class="abs" style="left:45px;top:7px" width="14" height="15" viewBox="0 0 12 13"><path d="M1.5 1.2v10.6L10.5 6.5z" fill="#8a9bae"/></svg>
  <div class="abs" style="left:68px;top:6px;width:1px;height:17px;background:#8a9bae"></div>
  <svg class="abs" style="left:78px;top:12px" width="10" height="6" viewBox="0 0 10 6"><path d="M.5.5h9L5 5.5z" fill="#8a9bae"/></svg>
  <div class="abs" style="left:96px;top:0;width:28px;height:28px;background:#848484;border-radius:3px"><svg class="abs" style="left:6px;top:6px" width="17" height="17" viewBox="0 0 17 17" fill="none" stroke="#141414" stroke-width="1.5" stroke-linejoin="round" stroke-linecap="round"><path d="M7.6 2.8H3.4c-.7 0-1.200000000000001.5-1.2 1.2v9.400000000000001c0 .7.5 1.2 1.2 1.2h9.4c.7 0 1.200000000000001-.5 1.2-1.2V9.600000000000001"/><path d="M7.4 10.2l.5-2.6 5.6-5.6c.6-.6 1.400000000000001-.6 2 0s.6 1.4 0 2l-5.600000000000001 5.6z" stroke-width="1.3"/></svg></div>
</div>
<div class="tbtn" style="left:1066px"><svg width="16" height="16" viewBox="0 0 16 16" fill="none" stroke="#141414" stroke-width="1.5"><path d="M8 2.5v11M2.5 8h11"/></svg></div>
<div class="tbtn" style="left:1104px"><svg width="18" height="18" viewBox="0 0 18 18" fill="none" stroke="#141414" stroke-width="1.5" stroke-linejoin="round"><path d="M6.2 4.400000000000001V3.4c0-.8.5-1.2 1.2-1.2h4l3 3v6.4c0 .8-.5 1.2-1.2 1.2H7.4c-.7 0-1.200000000000001-.5-1.2-1.2z"/><path d="M6 5H4.600000000000001c-.7 0-1.200000000000001.5-1.2 1.2v8.4c0 .8.5 1.200000000000001 1.200000000000001 1.200000000000001h5.8c.7 0 1.200000000000001-.5 1.200000000000001-1.200000000000001V13"/></svg></div>
<div class="tbtn" style="left:1142px"><svg width="18" height="18" viewBox="0 0 18 18" fill="#141414"><circle cx="3.4" cy="4.6" r="1.4"/><circle cx="3.4" cy="9" r="1.4"/><circle cx="3.4" cy="13.4" r="1.4"/><rect x="6.2" y="3.6" width="9.6" height="2" rx=".6"/><rect x="6.2" y="8" width="9.6" height="2" rx=".6"/><rect x="6.2" y="12.4" width="9.6" height="2" rx=".6"/></svg></div>
<div class="tbtn" style="left:1180px"><svg width="19" height="18" viewBox="0 0 19 18" fill="none" stroke="#141414" stroke-width="1.6" stroke-linejoin="round" stroke-linecap="round"><path d="M11.4 5.8V4.4c0-.7-.4-1.200000000000001-1.200000000000001-1.200000000000001H3.6c-.7 0-1.200000000000001.5-1.200000000000001 1.200000000000001v9.200000000000001c0 .7.5 1.200000000000001 1.200000000000001 1.200000000000001h6.6c.8 0 1.200000000000001-.5 1.200000000000001-1.200000000000001v-1.400000000000001"/><path d="M7.6 9h9.200000000000001M14.4 6.4L17 9l-2.600000000000001 2.6" /></svg></div>
<!-- right cluster -->
<div class="abs" style="left:1609px;top:62px;width:145px;height:30px;background:#7c7c7c;border:1px solid #5b5b5d;border-radius:4px">
  <svg class="abs" style="left:11px;top:6px" width="16" height="17" viewBox="0 0 16 17" fill="none" stroke="#8c3b30" stroke-width=".9" stroke-linejoin="round"><path d="M8 1.2L1.6 4.6 8 8l6.4-3.4zM1.6 4.6v2.2L8 10.200000000000001l6.4-3.4V4.6M1.6 6.8V9L8 12.4 14.4 9V6.8M1.6 9v2.8L8 15.4l6.4-3.600000000000001V9M1.6 11.8M3 5.4l6.400000000000001 -3.4M4.4 6.1l6.400000000000001 -3.4M5.8 6.9l6.400000000000001-3.4"/></svg>
  <span class="abs" style="left:34px;top:6px;font-size:12.8px;line-height:16px;color:#15171c;-webkit-text-stroke:.25px #15171c">Databricks</span>
  <div class="abs" style="left:102px;top:9.5px;width:9.8px;height:9.8px;border-radius:50%;background:#6f1220"></div>
  <svg class="abs" style="left:120px;top:12px" width="11" height="6" viewBox="0 0 11 6"><path d="M.3.3h10.4L5.5 5.7z" fill="#2c2c2e"/></svg>
</div>
<div class="tbtn" style="left:1761px;width:34px"><svg width="24" height="22" viewBox="0 0 22 20" fill="none" stroke="#333" stroke-width="1.8" stroke-linecap="round" stroke-linejoin="round"><path d="M4.4 10a7.4 7.4 0 1 0 2.2-5.300000000000001"/><path d="M.8 8l3.400000000000001 3.6 3.2-3.6z" fill="#333" stroke="none"/><path d="M11.8 6v4.4l2.800000000000001 1.8"/></svg></div>
<div class="tbtn" style="left:1802px;width:34px"><svg width="20" height="6" viewBox="0 0 20 6" fill="#0e0e0e"><circle cx="3.9" cy="3" r="2.1"/><circle cx="10" cy="3" r="2.1"/><circle cx="16.1" cy="3" r="2.1"/></svg></div>
<svg class="abs" style="left:1736.7px;top:11.5px" width="27" height="27" viewBox="0 0 24 24" fill="#14162c" stroke="#7b7c7f" stroke-width=".55"><path d="M19.43 12.98c.04-.32.07-.64.07-.98 0-.34-.03-.66-.07-.98l2.11-1.65c.19-.15.24-.42.12-.64l-2-3.46c-.09-.16-.26-.25-.44-.25-.06 0-.12.01-.17.03l-2.49 1c-.52-.4-1.08-.73-1.69-.98l-.38-2.65C14.46 2.18 14.25 2 14 2h-4c-.25 0-.46.18-.49.42l-.38 2.65c-.61.25-1.17.59-1.69.98l-2.49-1c-.06-.02-.12-.03-.18-.03-.17 0-.34.09-.43.25l-2 3.46c-.13.22-.07.49.12.64l2.11 1.65c-.04.32-.07.65-.07.98 0 .33.03.66.07.98l-2.11 1.65c-.19.15-.24.42-.12.64l2 3.46c.09.16.26.25.44.25.06 0 .12-.01.17-.03l2.49-1c.52.4 1.08.73 1.69.98l.38 2.65c.03.24.24.42.49.42h4c.25 0 .46-.18.49-.42l.38-2.65c.61-.25 1.17-.59 1.69-.98l2.49 1c.06.02.12.03.18.03.17 0 .34-.09.43-.25l2-3.46c.12-.22.07-.49-.12-.64l-2.11-1.65zm-1.98-1.71c.04.31.05.52.05.73 0 .21-.02.43-.05.73l-.14 1.13.89.7 1.08.84-.7 1.21-1.27-.51-1.04-.42-.9.68c-.43.32-.84.56-1.25.73l-1.06.43-.16 1.13-.2 1.35h-1.400l-.19-1.35-.16-1.13-1.06-.43c-.43-.18-.83-.41-1.23-.71l-.91-.7-1.06.43-1.27.51-.7-1.21 1.08-.84.89-.7-.14-1.13c-.03-.31-.05-.54-.05-.74s.02-.43.05-.73l.14-1.13-.89-.7-1.08-.84.7-1.21 1.27.51 1.04.42.9-.68c.43-.32.84-.56 1.25-.73l1.06-.43.16-1.13.2-1.35h1.390l.19 1.35.16 1.13 1.06.43c.43.18.83.41 1.23.71l.91.7 1.06-.43 1.27-.51.7 1.21-1.07.85-.89.7.14 1.13zM12 8c-2.210 0-4 1.790-4 4s1.790 4 4 4 4-1.790 4-4-1.790-4-4-4zm0 6c-1.100 0-2-.9-2-2s.9-2 2-2 2 .9 2 2-.9 2-2 2z"/></svg>
<div class="abs" style="left:1802px;top:8px;width:34px;height:34px;border-radius:50%;background:#656565;border:1px solid #7a84a4;color:#929292;font-size:22.5px;line-height:33px;text-align:center">M</div>
<div id="rail"><div class="abs" style="left:7px;top:11px;width:30px;height:30px;border:1px solid #75777b;border-radius:4px;background:#7d7f83;font-family:'Liberation Mono',monospace;font-size:10px;color:#2a2a2c;text-align:center;line-height:30px">i</div></div>
<div id="footer"><span class="abs" style="left:24px">©2025, DatafuseAI</span><span class="abs" style="left:1563px">Privacy</span><span class="abs" style="left:1626px">Terms</span></div>
<!--MODAL-->
<div id="modal">
  <div id="mhead"></div>
<!--B:modal1-->
<div class="abs" style="left:24px;top:18.8px;font-size:16.7px;font-weight:700;line-height:20px;color:#1c1c1c">RDBMS</div>
<svg class="abs" style="left:93.5px;top:20.5px" width="13" height="14" viewBox="0 0 13 14"><path d="M2.2 1.2C.8 1.8.4 3.6.8 5.6c.3 1.600000000000001.8 3 1.600000000000001 3.8.5.5 1 .4 1.2-.1l.3-1c.2 1.7.4 3.2.6 4.2.1.7.6 1 1.3 1s1.200000000000001-.4 1.200000000000001-1.200000000000001V9.600000000000001c.3.3.8.4 1.3.3l.2.9c.1.5.5.7.9.5 1.400000000000001-.8 2.400000000000001-3 2.800000000000001-5.300000000000001.3-2-.1-3.800000000000001-1.400000000000001-4.6C9.8.8 8.6.8 7.6 1.2 6.8.8 5.800000000000001.7 5 1 4 .7 3 .8 2.2 1.2z" fill="#336791"/><path d="M4.6 2.2c-.6 1.8-.6 3.8-.2 5.800000000000001M8 2c.8 1.6 1 3.6.6 5.800000000000001M6.2 3.4v5" stroke="#cfe0ee" stroke-width=".7" fill="none"/><circle cx="5.2" cy="3.6" r=".5" fill="#fff"/><circle cx="8" cy="3.6" r=".5" fill="#fff"/></svg>
<div class="abs" style="left:112.5px;top:20px;font-size:11.8px;line-height:16px;color:#222">PostgreSQL</div>
<svg class="abs" style="left:1124px;top:14.5px" width="17" height="17" viewBox="0 0 17 17" fill="#6a6a6a" stroke="#6a6a6a" stroke-width="1.7" stroke-linecap="round"><path d="M4 13L13 4" fill="none"/><path d="M10.2 1.8h5v5z M1.8 10.2v5h5z" stroke-width="0.6" stroke-linejoin="round"/></svg>
<svg class="abs" style="left:1167px;top:17px" width="16" height="16" viewBox="0 0 16 16" fill="none" stroke="#666" stroke-width="1.9" stroke-linecap="butt"><path d="M1.8 1.8l12.2 12.2M14 1.8L1.8 14"/></svg>
<div class="lbl" style="left:16.5px;top:78.4px;font-size:12px;line-height:16px">Source Name</div>
<div class="inp" style="left:136px;top:74px;width:941.5px;height:25px;border-color:#9c9c9c;line-height:22px;border-radius:4px;font-size:12.3px">source_2</div>
<div class="lbl" style="left:16.5px;top:111.4px;font-size:12px;line-height:16px">Profile</div>
<div class="inp" style="left:136px;top:107px;width:941.5px;height:24px;border-color:#d2d2d2;line-height:23.4px;border-radius:4px;font-size:12.3px">PostgreSQL</div>
<div class="lbl" style="left:16.5px;top:143.4px;font-size:12px;line-height:16px">Database</div>
<div class="inp" style="left:136px;top:139px;width:941.5px;height:24px;border-color:#d2d2d2;line-height:23.4px;border-radius:4px;font-size:12.3px">test</div>
<div class="lbl" style="left:16.5px;top:175.4px;font-size:12px;line-height:16px">Schemas</div>
<div class="inp" style="left:136px;top:171px;width:941.5px;height:24px;border-color:#d2d2d2;line-height:23.4px;border-radius:4px;font-size:12.3px">public</div>
<svg class="abs" style="left:1053px;top:114.5px" width="12" height="8" viewBox="0 0 12 8" fill="none" stroke="#1a1a1a" stroke-width="2" stroke-linecap="round" stroke-linejoin="round"><path d="M1.6 1.6l4.4 4.4 4.4-4.4"/></svg>
<div class="abs" style="left:1136px;top:72px;width:48px;height:24px;border:1px solid #dedede;border-radius:4px"><svg class="abs" style="left:16px;top:4px" width="14" height="14" viewBox="0 0 14 14" fill="none" stroke="#444" stroke-width="1.4" stroke-linecap="round"><path d="M11.6 7a4.6 4.6 0 1 1-1.400000000000001-3.3"/><path d="M12 1.6v3.8H8.2z" fill="#444" stroke="none"/></svg></div>
<div class="abs" style="left:1136px;top:104px;width:48px;height:28px;border:1px solid #dedede;border-radius:4px"><svg class="abs" style="left:14.6px;top:4.6px" width="16.4" height="16.4" viewBox="0 0 24 24" fill="#111"><path d="M19.43 12.98c.04-.32.07-.64.07-.98 0-.34-.03-.66-.07-.98l2.11-1.65c.19-.15.24-.42.12-.64l-2-3.46c-.09-.16-.26-.25-.44-.25-.06 0-.12.01-.17.03l-2.49 1c-.52-.4-1.08-.73-1.69-.98l-.38-2.65C14.46 2.18 14.25 2 14 2h-4c-.25 0-.46.18-.49.42l-.38 2.65c-.61.25-1.17.59-1.69.98l-2.49-1c-.06-.02-.12-.03-.18-.03-.17 0-.34.09-.43.25l-2 3.46c-.13.22-.07.49.12.64l2.11 1.65c-.04.32-.07.65-.07.98 0 .33.03.66.07.98l-2.11 1.65c-.19.15-.24.42-.12.64l2 3.46c.09.16.26.25.44.25.06 0 .12-.01.17-.03l2.49-1c.52.4 1.08.73 1.69.98l.38 2.65c.03.24.24.42.49.42h4c.25 0 .46-.18.49-.42l.38-2.65c.61-.25 1.17-.59 1.69-.98l2.49 1c.06.02.12.03.18.03.17 0 .34-.09.43-.25l2-3.46c.12-.22.07-.49-.12-.64l-2.11-1.65zm-1.98-1.71c.04.31.05.52.05.73 0 .21-.02.43-.05.73l-.14 1.13.89.7 1.08.84-.7 1.21-1.27-.51-1.04-.42-.9.68c-.43.32-.84.56-1.25.73l-1.06.43-.16 1.13-.2 1.35h-1.400l-.19-1.35-.16-1.13-1.06-.43c-.43-.18-.83-.41-1.23-.71l-.91-.7-1.06.43-1.27.51-.7-1.21 1.08-.84.89-.7-.14-1.13c-.03-.31-.05-.54-.05-.74s.02-.43.05-.73l.14-1.13-.89-.7-1.08-.84.7-1.21 1.27.51 1.04.42.9-.68c.43-.32.84-.56 1.25-.73l1.06-.43.16-1.13.2-1.35h1.390l.19 1.35.16 1.13 1.06.43c.43.18.83.41 1.23.71l.91.7 1.06-.43 1.27-.51.7 1.21-1.07.85-.89.7.14 1.13zM12 8c-2.210 0-4 1.790-4 4s1.790 4 4 4 4-1.790 4-4-1.790-4-4-4zm0 6c-1.100 0-2-.9-2-2s.9-2 2-2 2 .9 2 2-.9 2-2 2z"/></svg></div>
<div class="abs" style="left:0;top:211px;width:1200px;height:1px;background:#e3e3e3"></div>
<div class="abs" style="left:0;top:254px;width:1200px;height:2px;background:#e4e4e4"></div>
<div class="abs" style="left:17px;top:222.7px;width:20px;height:20px;border-radius:50%;border:2px solid #1a1f5c"><div class="abs" style="left:3px;top:3px;width:10px;height:10px;border-radius:50%;background:#1a1f5c"></div></div>
<div class="abs" style="left:95.8px;top:222.7px;width:20px;height:20px;border-radius:50%;border:2px solid #5a5a5a"></div>
<div class="abs" style="left:179.8px;top:222.7px;width:20px;height:20px;border-radius:50%;border:2px solid #5a5a5a"></div>
<div class="abs" style="left:48.5px;top:224px;font-size:13.2px;line-height:17px;color:#2e2e2e;white-space:nowrap">Table</div>
<div class="abs" style="left:126.6px;top:224px;font-size:13.2px;line-height:17px;color:#2e2e2e;white-space:nowrap">Query</div>
<div class="abs" style="left:211px;top:224px;font-size:13.2px;line-height:17px;color:#2e2e2e;white-space:nowrap">Saved Queries</div>
<!--E:modal1-->
<!--B:modal2-->
<div class="abs" style="left:17px;top:256px;width:209px;height:329.5px;border-left:1px solid #c4c4c4;border-bottom:1px solid #d0d0d0;overflow:hidden">
<div class="abs" style="left:14px;top:7.5px;width:179px;height:27px;border:1px solid #dcdcdc;border-radius:4px"></div>
<svg class="abs" style="left:23px;top:13.5px" width="15" height="15" viewBox="0 0 15 15" fill="none" stroke="#444" stroke-width="1.3" stroke-linecap="round"><circle cx="6.6" cy="6.6" r="4.8"/><path d="M10.2 10.2l2.800000000000001 2.800000000000001"/></svg>
<div class="abs" style="left:45.7px;top:12.5px;font-size:11.5px;line-height:15px;color:#b3b3b3">Search...</div>
<div class="abs" style="left:16.4px;top:47px;font-size:14.3px;line-height:18px;color:#1c1c1c;-webkit-text-stroke:.2px #1c1c1c">Tables</div>
<svg class="abs" style="left:175.5px;top:52px" width="11" height="8" viewBox="0 0 11 8" fill="none" stroke="#444" stroke-width="1.3"><path d="M1 1.2l4.5 4.6L10 1.2"/></svg>
<svg class="abs" style="left:18.5px;top:79.3px" width="8" height="12" viewBox="0 0 8 12" fill="none" stroke="#555" stroke-width="1.3"><path d="M1.6 1.4L6 6 1.6 10.600000000000001"/></svg>
<div class="abs" style="left:41.5px;top:75.8px;font-size:13.8px;line-height:18px;color:#555;white-space:nowrap">hr_department</div>
<div class="abs" style="left:0;top:100px;width:203px;height:1px;background:#d6d6d6"></div>
<svg class="abs" style="left:18.5px;top:114.3px" width="8" height="12" viewBox="0 0 8 12" fill="none" stroke="#555" stroke-width="1.3"><path d="M1.6 1.4L6 6 1.6 10.600000000000001"/></svg>
<div class="abs" style="left:41.5px;top:110.8px;font-size:13.8px;line-height:18px;color:#555;white-space:nowrap">teting12335t5</div>
<div class="abs" style="left:0;top:135px;width:203px;height:1px;background:#d6d6d6"></div>
<svg class="abs" style="left:18.5px;top:149.3px" width="8" height="12" viewBox="0 0 8 12" fill="none" stroke="#555" stroke-width="1.3"><path d="M1.6 1.4L6 6 1.6 10.600000000000001"/></svg>
<div class="abs" style="left:41.5px;top:145.8px;font-size:13.8px;line-height:18px;color:#555;white-space:nowrap">test</div>
<div class="abs" style="left:0;top:170px;width:203px;height:1px;background:#d6d6d6"></div>
<svg class="abs" style="left:18.5px;top:184.3px" width="8" height="12" viewBox="0 0 8 12" fill="none" stroke="#555" stroke-width="1.3"><path d="M1.6 1.4L6 6 1.6 10.600000000000001"/></svg>
<div class="abs" style="left:41.5px;top:180.8px;font-size:13.8px;line-height:18px;color:#555;white-space:nowrap">filter_outpu23t</div>
<div class="abs" style="left:0;top:205px;width:203px;height:1px;background:#d6d6d6"></div>
<svg class="abs" style="left:18.5px;top:219.3px" width="8" height="12" viewBox="0 0 8 12" fill="none" stroke="#555" stroke-width="1.3"><path d="M1.6 1.4L6 6 1.6 10.600000000000001"/></svg>
<div class="abs" style="left:41.5px;top:215.8px;font-size:13.8px;line-height:18px;color:#555;white-space:nowrap">split_output1</div>
<div class="abs" style="left:0;top:240px;width:203px;height:1px;background:#d6d6d6"></div>
<svg class="abs" style="left:18.5px;top:254.3px" width="8" height="12" viewBox="0 0 8 12" fill="none" stroke="#555" stroke-width="1.3"><path d="M1.6 1.4L6 6 1.6 10.600000000000001"/></svg>
<div class="abs" style="left:41.5px;top:250.8px;font-size:13.8px;line-height:18px;color:#555;white-space:nowrap">jj</div>
<div class="abs" style="left:0;top:275px;width:203px;height:1px;background:#d6d6d6"></div>
<svg class="abs" style="left:18.5px;top:289.3px" width="8" height="12" viewBox="0 0 8 12" fill="none" stroke="#555" stroke-width="1.3"><path d="M1.6 1.4L6 6 1.6 10.600000000000001"/></svg>
<div class="abs" style="left:41.5px;top:285.8px;font-size:13.8px;line-height:18px;color:#555;white-space:nowrap">count2aliaser</div>
<div class="abs" style="left:0;top:310px;width:203px;height:1px;background:#d6d6d6"></div>
<svg class="abs" style="left:18.5px;top:324.3px" width="8" height="12" viewBox="0 0 8 12" fill="none" stroke="#555" stroke-width="1.3"><path d="M1.6 1.4L6 6 1.6 10.600000000000001"/></svg>
<div class="abs" style="left:41.5px;top:320.8px;font-size:13.8px;line-height:18px;color:#555;white-space:nowrap">tbl_102</div>
<div class="abs" style="left:0;top:345px;width:203px;height:1px;background:#d6d6d6"></div>
<div class="abs" style="left:203px;top:70px;width:4px;height:17px;border-radius:2px;background:#5a5a5a"></div>
</div>
<div class="abs" style="left:225.2px;top:256px;width:8.6px;height:328.5px;background:#dedede"></div>
<div class="abs" style="left:226px;top:411px;width:7.2px;height:19.6px;background:#8c8c8c"><svg class="abs" style="left:1px;top:5px" width="6" height="10" viewBox="0 0 6 10"><path d="M.5 .5v9L5.5 5z" fill="#e8e8e8"/></svg></div>
<div class="abs" style="left:17px;top:584.5px;width:1166px;height:1px;background:#d6d6d6"></div>
<div class="abs" style="left:1182.5px;top:256px;width:1px;height:329px;background:#dedede"></div>
<div class="abs" style="left:250px;top:277px;font-size:14px;line-height:18px;color:#222">Employee</div>
<div class="abs" style="left:250px;top:305px;width:912px;height:1px;background:#dcdcdc"></div>
<div class="abs" style="left:250px;top:314px;width:912px;height:30.6px;background:#e9effb;border-bottom:1px solid #ccd3e0"></div>
<div class="abs" style="left:267px;top:322px;width:14.4px;height:14.4px;border-radius:3px;background:#1a73d4"><svg class="abs" style="left:1.7px;top:2.2px" width="11" height="10" viewBox="0 0 11 10" fill="none" stroke="#fff" stroke-width="1.7" stroke-linecap="round" stroke-linejoin="round"><path d="M2 5.2l2.400000000000001 2.400000000000001L9 2.6"/></svg></div>
<div class="abs" style="left:292px;top:321.5px;width:1px;height:15px;background:#c8c8c8"></div>
<div class="abs" style="left:304.6px;top:320px;font-size:13px;font-weight:700;line-height:17px;color:#111;white-space:nowrap;transform:scaleX(.885);transform-origin:0 0">Column Name</div>
<div class="abs" style="left:493.2px;top:320px;font-size:13px;font-weight:700;line-height:17px;color:#111;white-space:nowrap;transform:scaleX(.885);transform-origin:0 0">Alias</div>
<div class="abs" style="left:721.5px;top:320px;font-size:13px;font-weight:700;line-height:17px;color:#111;white-space:nowrap;transform:scaleX(.885);transform-origin:0 0">Data Type</div>
<div class="abs" style="left:477px;top:324px;width:2px;height:10px;background:#d0d4dc"></div>
<div class="abs" style="left:704px;top:324px;width:2px;height:10px;background:#d0d4dc"></div>
<div class="abs" style="left:250px;top:344.5px;width:912px;height:28px;background:#f1f1f1;border-bottom:1px solid #dfdfdf"></div>
<div class="abs" style="left:266px;top:351.7px;width:14.4px;height:14.4px;border-radius:3px;background:#1a73d4"><svg class="abs" style="left:1.7px;top:2.2px" width="11" height="10" viewBox="0 0 11 10" fill="none" stroke="#fff" stroke-width="1.7" stroke-linecap="round" stroke-linejoin="round"><path d="M2 5.2l2.400000000000001 2.400000000000001L9 2.6"/></svg></div>
<div class="abs" style="left:302.8px;top:350.7px;font-size:12.5px;line-height:16px;color:#555;white-space:nowrap">employee_id</div>
<div class="abs" style="left:493px;top:346.0px;width:198px;height:24.5px;border:1px solid #a9a9a9;border-radius:3px;font-size:12.5px;line-height:24px;color:#303030;padding-left:7px">employee_id</div>
<div class="abs" style="left:721px;top:352.2px;width:12px;height:12px;border-radius:2px;background:#ea6753"><svg width="12" height="12" viewBox="0 0 12 12" fill="none" stroke="#fff" stroke-width="1.1"><path d="M4.6 2.4v7.2M7.4 2.4v7.2M2.4 4.6h7.2M2.4 7.4h7.2"/></svg></div>
<div class="abs" style="left:738px;top:350.2px;font-size:12.5px;line-height:16px;color:#555;white-space:nowrap">integer</div>
<div class="abs" style="left:949px;top:346.0px;width:198px;height:24px;border:1px solid #a9a9a9;border-radius:3px;font-size:12px;line-height:22px;color:#333;padding-left:12.5px">Int<svg class="abs" style="left:180px;top:8px" width="9" height="6" viewBox="0 0 9 6" fill="none" stroke="#444" stroke-width="1.2"><path d="M1 1l3.5 3.5L8 1"/></svg></div>
<div class="abs" style="left:250px;top:372.5px;width:912px;height:28px;background:#f1f1f1;border-bottom:1px solid #dfdfdf"></div>
<div class="abs" style="left:266px;top:379.7px;width:14.4px;height:14.4px;border-radius:3px;background:#1a73d4"><svg class="abs" style="left:1.7px;top:2.2px" width="11" height="10" viewBox="0 0 11 10" fill="none" stroke="#fff" stroke-width="1.7" stroke-linecap="round" stroke-linejoin="round"><path d="M2 5.2l2.400000000000001 2.400000000000001L9 2.6"/></svg></div>
<div class="abs" style="left:302.8px;top:378.7px;font-size:12.5px;line-height:16px;color:#555;white-space:nowrap">first_name</div>
<div class="abs" style="left:493px;top:374.0px;width:198px;height:24.5px;border:1px solid #a9a9a9;border-radius:3px;font-size:12.5px;line-height:24px;color:#303030;padding-left:7px">first_name</div>
<div class="abs" style="left:721px;top:380.2px;width:12px;height:12px;border-radius:2px;background:#1d9ad6;color:#fff;font-size:5.5px;font-weight:700;line-height:12px;text-align:center;letter-spacing:-.2px">abc</div>
<div class="abs" style="left:738px;top:378.2px;font-size:12.5px;line-height:16px;color:#555;white-space:nowrap">text</div>
<div class="abs" style="left:949px;top:374.0px;width:198px;height:24px;border:1px solid #a9a9a9;border-radius:3px;font-size:12px;line-height:22px;color:#333;padding-left:12.5px">String<svg class="abs" style="left:180px;top:8px" width="9" height="6" viewBox="0 0 9 6" fill="none" stroke="#444" stroke-width="1.2"><path d="M1 1l3.5 3.5L8 1"/></svg></div>
<div class="abs" style="left:250px;top:400.5px;width:912px;height:28px;background:#f1f1f1;border-bottom:1px solid #dfdfdf"></div>
<div class="abs" style="left:266px;top:407.7px;width:14.4px;height:14.4px;border-radius:3px;background:#1a73d4"><svg class="abs" style="left:1.7px;top:2.2px" width="11" height="10" viewBox="0 0 11 10" fill="none" stroke="#fff" stroke-width="1.7" stroke-linecap="round" stroke-linejoin="round"><path d="M2 5.2l2.400000000000001 2.400000000000001L9 2.6"/></svg></div>
<div class="abs" style="left:302.8px;top:406.7px;font-size:12.5px;line-height:16px;color:#555;white-space:nowrap">last_name</div>
<div class="abs" style="left:493px;top:402.0px;width:198px;height:24.5px;border:1px solid #a9a9a9;border-radius:3px;font-size:12.5px;line-height:24px;color:#303030;padding-left:7px">last_name</div>
<div class="abs" style="left:721px;top:408.2px;width:12px;height:12px;border-radius:2px;background:#1d9ad6;color:#fff;font-size:5.5px;font-weight:700;line-height:12px;text-align:center;letter-spacing:-.2px">abc</div>
<div class="abs" style="left:738px;top:406.2px;font-size:12.5px;line-height:16px;color:#555;white-space:nowrap">text</div>
<div class="abs" style="left:949px;top:402.0px;width:198px;height:24px;border:1px solid #a9a9a9;border-radius:3px;font-size:12px;line-height:22px;color:#333;padding-left:12.5px">String<svg class="abs" style="left:180px;top:8px" width="9" height="6" viewBox="0 0 9 6" fill="none" stroke="#444" stroke-width="1.2"><path d="M1 1l3.5 3.5L8 1"/></svg></div>
<div class="abs" style="left:250px;top:428.5px;width:912px;height:28px;background:#f1f1f1;border-bottom:1px solid #dfdfdf"></div>
<div class="abs" style="left:266px;top:435.7px;width:14.4px;height:14.4px;border-radius:3px;background:#1a73d4"><svg class="abs" style="left:1.7px;top:2.2px" width="11" height="10" viewBox="0 0 11 10" fill="none" stroke="#fff" stroke-width="1.7" stroke-linecap="round" stroke-linejoin="round"><path d="M2 5.2l2.400000000000001 2.400000000000001L9 2.6"/></svg></div>
<div class="abs" style="left:302.8px;top:434.7px;font-size:12.5px;line-height:16px;color:#555;white-space:nowrap">dept_id</div>
<div class="abs" style="left:493px;top:430.0px;width:198px;height:24.5px;border:1px solid #a9a9a9;border-radius:3px;font-size:12.5px;line-height:24px;color:#303030;padding-left:7px">dept_id</div>
<div class="abs" style="left:721px;top:436.2px;width:12px;height:12px;border-radius:2px;background:#ea6753"><svg width="12" height="12" viewBox="0 0 12 12" fill="none" stroke="#fff" stroke-width="1.1"><path d="M4.6 2.4v7.2M7.4 2.4v7.2M2.4 4.6h7.2M2.4 7.4h7.2"/></svg></div>
<div class="abs" style="left:738px;top:434.2px;font-size:12.5px;line-height:16px;color:#555;white-space:nowrap">integer</div>
<div class="abs" style="left:949px;top:430.0px;width:198px;height:24px;border:1px solid #a9a9a9;border-radius:3px;font-size:12px;line-height:22px;color:#333;padding-left:12.5px">Int<svg class="abs" style="left:180px;top:8px" width="9" height="6" viewBox="0 0 9 6" fill="none" stroke="#444" stroke-width="1.2"><path d="M1 1l3.5 3.5L8 1"/></svg></div>
<div class="abs" style="left:250px;top:456.5px;width:912px;height:28px;background:#f1f1f1;border-bottom:1px solid #dfdfdf"></div>
<div class="abs" style="left:266px;top:463.7px;width:14.4px;height:14.4px;border-radius:3px;background:#1a73d4"><svg class="abs" style="left:1.7px;top:2.2px" width="11" height="10" viewBox="0 0 11 10" fill="none" stroke="#fff" stroke-width="1.7" stroke-linecap="round" stroke-linejoin="round"><path d="M2 5.2l2.400000000000001 2.400000000000001L9 2.6"/></svg></div>
<div class="abs" style="left:302.8px;top:462.7px;font-size:12.5px;line-height:16px;color:#555;white-space:nowrap">manager_id</div>
<div class="abs" style="left:493px;top:458.0px;width:198px;height:24.5px;border:1px solid #a9a9a9;border-radius:3px;font-size:12.5px;line-height:24px;color:#303030;padding-left:7px">manager_id</div>
<div class="abs" style="left:721px;top:464.2px;width:12px;height:12px;border-radius:2px;background:#ea6753"><svg width="12" height="12" viewBox="0 0 12 12" fill="none" stroke="#fff" stroke-width="1.1"><path d="M4.6 2.4v7.2M7.4 2.4v7.2M2.4 4.6h7.2M2.4 7.4h7.2"/></svg></div>
<div class="abs" style="left:738px;top:462.2px;font-size:12.5px;line-height:16px;color:#555;white-space:nowrap">integer</div>
<div class="abs" style="left:949px;top:458.0px;width:198px;height:24px;border:1px solid #a9a9a9;border-radius:3px;font-size:12px;line-height:22px;color:#333;padding-left:12.5px">Int<svg class="abs" style="left:180px;top:8px" width="9" height="6" viewBox="0 0 9 6" fill="none" stroke="#444" stroke-width="1.2"><path d="M1 1l3.5 3.5L8 1"/></svg></div>
<div class="abs" style="left:250px;top:484.5px;width:912px;height:28px;background:#f1f1f1;border-bottom:1px solid #dfdfdf"></div>
<div class="abs" style="left:266px;top:491.7px;width:14.4px;height:14.4px;border-radius:3px;background:#1a73d4"><svg class="abs" style="left:1.7px;top:2.2px" width="11" height="10" viewBox="0 0 11 10" fill="none" stroke="#fff" stroke-width="1.7" stroke-linecap="round" stroke-linejoin="round"><path d="M2 5.2l2.400000000000001 2.400000000000001L9 2.6"/></svg></div>
<div class="abs" style="left:302.8px;top:490.7px;font-size:12.5px;line-height:16px;color:#555;white-space:nowrap">salary</div>
<div class="abs" style="left:493px;top:486.0px;width:198px;height:24.5px;border:1px solid #a9a9a9;border-radius:3px;font-size:12.5px;line-height:24px;color:#303030;padding-left:7px">salary</div>
<div class="abs" style="left:721px;top:492.2px;width:12px;height:12px;border-radius:2px;background:#ea6753"><svg width="12" height="12" viewBox="0 0 12 12" fill="none" stroke="#fff" stroke-width="1.1"><path d="M4.6 2.4v7.2M7.4 2.4v7.2M2.4 4.6h7.2M2.4 7.4h7.2"/></svg></div>
<div class="abs" style="left:738px;top:490.2px;font-size:12.5px;line-height:16px;color:#555;white-space:nowrap">double precision</div>
<div class="abs" style="left:949px;top:486.0px;width:198px;height:24px;border:1px solid #a9a9a9;border-radius:3px;font-size:12px;line-height:22px;color:#333;padding-left:12.5px">Double<svg class="abs" style="left:180px;top:8px" width="9" height="6" viewBox="0 0 9 6" fill="none" stroke="#444" stroke-width="1.2"><path d="M1 1l3.5 3.5L8 1"/></svg></div>
<div class="abs" style="left:250px;top:512.5px;width:912px;height:28px;background:#f1f1f1;border-bottom:1px solid #dfdfdf"></div>
<div class="abs" style="left:266px;top:519.7px;width:14.4px;height:14.4px;border-radius:3px;background:#1a73d4"><svg class="abs" style="left:1.7px;top:2.2px" width="11" height="10" viewBox="0 0 11 10" fill="none" stroke="#fff" stroke-width="1.7" stroke-linecap="round" stroke-linejoin="round"><path d="M2 5.2l2.400000000000001 2.400000000000001L9 2.6"/></svg></div>
<div class="abs" style="left:302.8px;top:518.7px;font-size:12.5px;line-height:16px;color:#555;white-space:nowrap">expertise</div>
<div class="abs" style="left:493px;top:514.0px;width:198px;height:24.5px;border:1px solid #a9a9a9;border-radius:3px;font-size:12.5px;line-height:24px;color:#303030;padding-left:7px">expertise</div>
<div class="abs" style="left:721px;top:520.2px;width:12px;height:12px;border-radius:2px;background:#1d9ad6;color:#fff;font-size:5.5px;font-weight:700;line-height:12px;text-align:center;letter-spacing:-.2px">abc</div>
<div class="abs" style="left:738px;top:518.2px;font-size:12.5px;line-height:16px;color:#555;white-space:nowrap">text</div>
<div class="abs" style="left:949px;top:514.0px;width:198px;height:24px;border:1px solid #a9a9a9;border-radius:3px;font-size:12px;line-height:22px;color:#333;padding-left:12.5px">String<svg class="abs" style="left:180px;top:8px" width="9" height="6" viewBox="0 0 9 6" fill="none" stroke="#444" stroke-width="1.2"><path d="M1 1l3.5 3.5L8 1"/></svg></div>
<div class="abs" style="left:1031px;top:594px;width:86.5px;height:36.5px;border:1px solid #b8b8b8;border-radius:3px;font-size:13.3px;line-height:35px;text-align:center;color:#1a1f5c">CANCEL</div>
<div class="abs" style="left:1126px;top:594px;width:65.5px;height:36.5px;background:#1a1f5c;border-radius:3px;font-size:13.3px;line-height:37px;text-align:center;color:#fff;box-shadow:0 2px 3px rgba(0,0,0,.3)">SAVE</div>
<!--E:modal2-->
</div>
<!--POPUP-->
<div id="pop">
  <div id="phead"></div>
<!--B:pop-->
<div class="abs" style="left:13.3px;top:11.3px;font-size:16.6px;line-height:20px;color:#1f2329;letter-spacing:.12px;white-space:nowrap">Additional Settings</div>
<svg class="abs" style="left:365.5px;top:15.7px" width="11" height="11" viewBox="0 0 12 12" fill="none" stroke="#444" stroke-width="1.3" stroke-linecap="round"><path d="M1.5 1.5l9 9M10.5 1.5l-9 9"/></svg>
<div class="lbl" style="left:12.6px;top:57.2px;font-size:12px;line-height:16px;color:#222">Fetch Size</div>
<div class="inp" style="left:133px;top:54px;width:254px;height:22px;border-color:#d0d0d0;border-radius:3px;line-height:21px;font-size:12px;color:#b0b0b0;padding-left:6px;letter-spacing:0.9px">10000</div>
<div class="lbl" style="left:12.6px;top:88.2px;font-size:12px;line-height:16px;color:#222">Packet Size</div>
<div class="inp" style="left:133px;top:86px;width:254px;height:21px;border-color:#d0d0d0;border-radius:3px;line-height:20px;font-size:12px;color:#b0b0b0;padding-left:6px;letter-spacing:0.9px">5</div>
<div class="lbl" style="left:12.6px;top:121.2px;font-size:12px;line-height:16px;color:#222">Column Name</div>
<div class="inp" style="left:133px;top:117px;width:254px;height:24px;border-color:#d0d0d0;border-radius:3px;line-height:23px;font-size:12.6px;color:#222;padding-left:7px;letter-spacing:0px">employee_id</div>
<div class="lbl" style="left:12.6px;top:154.2px;font-size:12px;line-height:16px;color:#222">Lower Bound</div>
<div class="inp" style="left:133px;top:151px;width:254px;height:21px;border-color:#d0d0d0;border-radius:3px;line-height:20px;font-size:12.6px;color:#222;padding-left:7px;letter-spacing:0px"></div>
<div class="lbl" style="left:12.6px;top:185.2px;font-size:12px;line-height:16px;color:#222">Upper Bound</div>
<div class="inp" style="left:133px;top:182px;width:254px;height:21px;border-color:#d0d0d0;border-radius:3px;line-height:20px;font-size:12.6px;color:#222;padding-left:7px;letter-spacing:0px"></div>
<svg class="abs" style="left:362px;top:125.5px" width="12" height="8" viewBox="0 0 12 8" fill="none" stroke="#1a1a1a" stroke-width="2" stroke-linecap="round" stroke-linejoin="round"><path d="M1.6 1.6l4.4 4.4 4.4-4.4"/></svg>
<div class="abs" style="left:240px;top:230px;width:64px;height:29px;border:1px solid #8185b0;border-radius:3px;font-size:11.6px;line-height:25.6px;text-align:center;color:#1a1f5c">CANCEL</div>
<div class="abs" style="left:322px;top:231px;width:64px;height:27px;background:#1a1f5c;border-radius:3px;font-size:11.6px;line-height:25.6px;text-align:center;color:#fff;box-shadow:0 1px 3px rgba(0,0,0,.35)">SAVE</div>
<!--E:pop-->
</div>
</body>
</html>
